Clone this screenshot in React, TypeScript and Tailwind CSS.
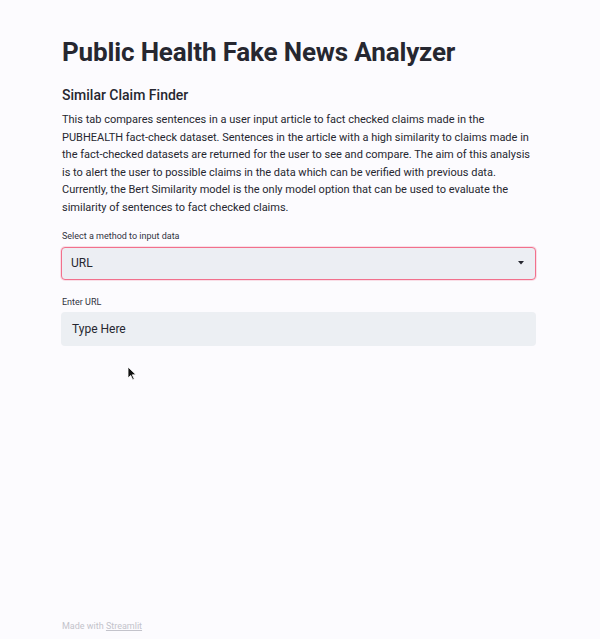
import React from 'react';

const font = { fontFamily: 'Roboto, "Liberation Sans", sans-serif' };

export default function App() {
  return (
    <div
      className="relative min-h-[639px] w-[600px] bg-[#fcfbfe] text-[#262730] flex flex-col"
      style={font}
    >
      <main className="flex-1 pl-[62px] pr-[64px] pt-[34px]">
        <h1 className="text-[26px] font-bold leading-[36px] tracking-[-0.15px]">
          Public Health Fake News Analyzer
        </h1>
        <h3 className="mt-[14px] text-[14px] font-medium leading-[22px]">Similar Claim Finder</h3>
        <p className="mt-[5px] text-[11px] leading-[17.6px] whitespace-nowrap">
          This tab compares sentences in a user input article to fact checked claims made in the
          <br />
          PUBHEALTH fact-check dataset. Sentences in the article with a high similarity to claims made in
          <br />
          the fact-checked datasets are returned for the user to see and compare. The aim of this analysis
          <br />
          is to alert the user to possible claims in the data which can be verified with previous data.
          <br />
          Currently, the Bert Similarity model is the only model option that can be used to evaluate the
          <br />
          similarity of sentences to fact checked claims.
        </p>

        {/* select */}
        <div className="mt-[12px]">
          <label className="block text-[9px] leading-[14px] text-[#31333f]">Select a method to input data</label>
          <div className="mt-[4px] -ml-[1px] flex h-[33px] items-center justify-between rounded-[4px] border border-[#f2708c] bg-[#eceef3] pl-[9px] pr-[11px] shadow-[0_0_0_1px_rgba(242,112,140,0.2)]">
            <span className="text-[12px]">URL</span>
            <svg width="6" height="4" viewBox="0 0 6 4">
              <path d="M0 0h6L3 3.5z" fill="#262730" />
            </svg>
          </div>
        </div>

        {/* text input */}
        <div className="mt-[15px]">
          <label className="block text-[9px] leading-[14px] text-[#31333f]">Enter URL</label>
          <div className="mt-[3px] -ml-[1px] flex h-[34px] items-center rounded-[4px] bg-[#eceff3] pl-[11px]">
            <span className="text-[12px]">Type Here</span>
          </div>
        </div>
      </main>

      <footer className="px-[62px] pb-[6px] text-[9px] leading-[14px] text-[#c3c3cb]">
        Made with <span className="underline">Streamlit</span>
      </footer>

      {/* mouse pointer */}
      <svg className="absolute left-[127px] top-[366px]" width="10" height="15" viewBox="0 0 10 15">
        <path d="M1 1v11l2.7-2.6 2 4.3 1.6-.7-2-4.2H9z" fill="#111" stroke="#fff" strokeWidth="0.8" />
      </svg>
    </div>
  );
}
